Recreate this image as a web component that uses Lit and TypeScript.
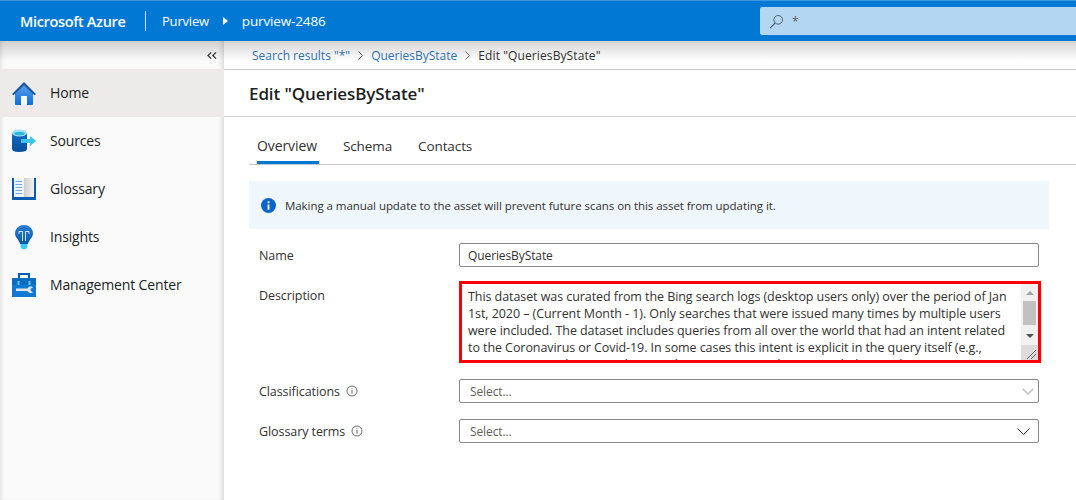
import { LitElement, html, css, svg } from 'lit';
import { customElement } from 'lit/decorators.js';

const homeIcon = html`<svg width="26" height="26" viewBox="0 0 26 26">
  <defs><linearGradient id="hg" x1="0" y1="0" x2="0" y2="1"><stop offset="0" stop-color="#5ea0ef"/><stop offset="1" stop-color="#0f6fd8"/></linearGradient></defs>
  <path d="M13 4 L22 13 V24 Q22 25 21 25 H5 Q4 25 4 24 V13 Z" fill="url(#hg)"/>
  <rect x="10" y="16" width="6" height="9" fill="#f4f8fd"/>
  <path d="M1 14 L13 2 L25 14 L23.4 15.3 L13 5.2 L2.6 15.3 Z" fill="#1b5a9e"/>
</svg>`;

const sourcesIcon = html`<svg width="26" height="26" viewBox="0 0 26 26">
  <defs><linearGradient id="sg" x1="0" y1="0" x2="0" y2="1"><stop offset="0" stop-color="#0f6ac0"/><stop offset="1" stop-color="#0a4f9c"/></linearGradient></defs>
  <path d="M1 5 V21 Q1 24 8 24 Q16 24 16 21 V5 Z" fill="url(#sg)"/>
  <ellipse cx="8.5" cy="5" rx="7.5" ry="3.4" fill="#9fe3f5"/>
  <ellipse cx="8.5" cy="5.6" rx="5.2" ry="1.9" fill="#2fb4e0"/>
  <path d="M10 11 H19 V8 L25 13 L19 18 V15 H10 Z" fill="#3cc4ea"/>
</svg>`;

const glossaryIcon = html`<svg width="26" height="26" viewBox="0 0 26 26">
  <defs><linearGradient id="gg" x1="0" y1="0" x2="1" y2="0"><stop offset="0" stop-color="#cfcfcf"/><stop offset="1" stop-color="#f2f2f2"/></linearGradient></defs>
  <rect x="1" y="2" width="24" height="22" fill="#0a5cb0"/>
  <rect x="3" y="2" width="10" height="19" fill="#f2f6fb"/>
  <rect x="13" y="2" width="10" height="19" fill="url(#gg)"/>
  ${[5, 8, 11, 14, 17].map(y => svg`<rect x="4.5" y=${y} width="6.5" height="1" fill="#6aa8ee"/>`)}
</svg>`;

const insightsIcon = html`<svg width="26" height="26" viewBox="0 0 26 26">
  <defs><linearGradient id="ig" x1="0" y1="0" x2="0" y2="1"><stop offset="0" stop-color="#2a7fd0"/><stop offset="1" stop-color="#0b57a8"/></linearGradient></defs>
  <path d="M13 1 C7 1 4 5.5 4 9.5 C4 13.5 8 15.5 9 20 H17 C18 15.5 22 13.5 22 9.5 C22 5.5 19 1 13 1 Z" fill="url(#ig)"/>
  <path d="M8 7.5 H11.5 M8 7.5 V10 M14.5 7.5 H18 M18 7.5 V10 M11.5 7.5 V17 M14.5 7.5 V17" stroke="#cfe6fb" stroke-width="1" fill="none"/>
  <path d="M9.5 20 H16.5 V23 L15 25 H11 L9.5 23 Z" fill="#3ccbf0"/>
</svg>`;

const mgmtIcon = html`<svg width="26" height="26" viewBox="0 0 26 26">
  <path d="M7 6 V1 H19 V6 H17 V3 H9 V6 Z" fill="#0a5cb0"/>
  <rect x="1" y="6" width="24" height="19" fill="#1079d2"/>
  <rect x="1" y="6" width="24" height="7" fill="#0b6cc0"/>
  <rect x="6.5" y="9" width="2" height="4" fill="#5cc6f0"/>
  <rect x="17.5" y="9" width="2" height="4" fill="#5cc6f0"/>
  <path d="M5 16.5 H16.5 A3.6 3.6 0 0 1 22 15.3 L19.5 17 V18.6 L22 20.2 A3.6 3.6 0 0 1 16.5 19 H5 Z" fill="#e4e6ea"/>
</svg>`;

const navItems = [
  { label: 'Home', icon: homeIcon, active: true },
  { label: 'Sources', icon: sourcesIcon, active: false },
  { label: 'Glossary', icon: glossaryIcon, active: false },
  { label: 'Insights', icon: insightsIcon, active: false },
  { label: 'Management Center', icon: mgmtIcon, active: false },
];

const descLines = [
  'This dataset was curated from the Bing search logs (desktop users only) over the period of Jan',
  '1st, 2020 – (Current Month - 1). Only searches that were issued many times by multiple users',
  'were included. The dataset includes queries from all over the world that had an intent related',
  'to the Coronavirus or Covid-19. In some cases this intent is explicit in the query itself (e.g.,',
  '“Coronavirus updates Seattle”), in other cases it is implicit , e.g. “Shelter in place”',
];

const infoOutline = html`<svg width="12" height="12" viewBox="0 0 12 12">
  <circle cx="6" cy="6" r="5" fill="none" stroke="#605e5c" stroke-width="0.9"/>
  <rect x="5.5" y="5" width="1" height="3.6" fill="#605e5c"/>
  <rect x="5.5" y="3.2" width="1" height="1" fill="#605e5c"/>
</svg>`;

const pathSep = html`<svg width="5" height="9" viewBox="0 0 5 9">
  <path d="M0.5 0.5 L4.5 4.5 L0.5 8.5" fill="none" stroke="#605e5c" stroke-width="0.9"/>
</svg>`;

@customElement('app-root')
export class AppRoot extends LitElement {
  static styles = css`
    :host {
      display: block;
      width: 1076px;
      height: 500px;
      overflow: hidden;
      position: relative;
      background: #fff;
      font-family: "Open Sans", "Noto Sans", sans-serif;
      color: #323130;
    }
    .top {
      height: 40px;
      border-top: 1px solid #3f97dc;
      background: #0078d4;
      color: #fff;
      display: flex;
      align-items: center;
      font-size: 13px;
    }
    .brand {
      margin-left: 20px;
      width: 125px;
      font-size: 14.5px;
      font-weight: 600;
      letter-spacing: -0.35px;
      white-space: nowrap;
    }
    .sep {
      width: 1px;
      height: 20px;
      background: #cfe4f6;
    }
    .crumb {
      margin-left: 16px;
      letter-spacing: -0.2px;
      font-weight: 500;
    }
    .crumb.res {
      margin-left: 0;
      font-size: 13.5px;
      letter-spacing: -0.15px;
    }
    .caret {
      margin: 0 14px;
      width: 0;
      height: 0;
      border-left: 5px solid #fff;
      border-top: 4px solid transparent;
      border-bottom: 4px solid transparent;
    }
    .search {
      margin-left: auto;
      width: 316px;
      height: 28px;
      background: #b3d6f2;
      border-radius: 2px 0 0 2px;
      display: flex;
      align-items: center;
      padding-left: 9px;
      box-sizing: border-box;
      gap: 8px;
      color: #605e5c;
      font-size: 12px;
    }
    .body {
      display: flex;
      height: 459px;
    }
    .shade {
      position: absolute;
      top: 41px;
      left: 0;
      right: 0;
      height: 20px;
      background: linear-gradient(rgba(0, 0, 0, 0.17), rgba(0, 0, 0, 0));
      pointer-events: none;
      z-index: 2;
    }
    .side {
      width: 224px;
      flex: none;
      background: #fafafa;
      box-shadow: inset 4px 0 4px -3px #dedede, inset -5px 0 4px -3px #d8d8d8;
    }
    .collapse {
      height: 28px;
      display: flex;
      justify-content: flex-end;
      align-items: center;
      padding-right: 7px;
    }
    .nav {
      height: 48px;
      display: flex;
      align-items: center;
      padding-left: 11px;
      gap: 13px;
      font-size: 14px;
      font-weight: 500;
      letter-spacing: -0.15px;
      color: #201f1e;
    }
    .nav.active {
      background: #edebe9;
    }
    .nav span {
      margin-top: -2px;
    }
    .nav svg {
      flex: none;
    }
    .main {
      flex: 1;
      min-width: 0;
    }
    .path {
      height: 28px;
      display: flex;
      align-items: center;
      padding-left: 28px;
      gap: 8px;
      font-size: 12px;
      color: #323130;
      border-bottom: 1px solid #c8c8c8;
    }
    .path a {
      color: #2f75ba;
    }
    .path span {
      letter-spacing: 0.1px;
    }
    .title {
      height: 46px;
      display: flex;
      align-items: center;
      padding-left: 25px;
      font-size: 17px;
      font-weight: 600;
      letter-spacing: -0.1px;
      color: #201f1e;
      border-bottom: 1px solid #d2d0ce;
    }
    .content {
      padding-left: 25px;
    }
    .tabs {
      margin-top: 16px;
      height: 31px;
      display: flex;
      padding-left: 8px;
      gap: 24px;
      font-size: 13.5px;
      letter-spacing: -0.1px;
      border-bottom: 1px solid #c8c8c8;
      color: #323130;
    }
    .tab {
      height: 31px;
      line-height: 26px;
      box-sizing: border-box;
      padding-right: 2px;
    }
    .tab.on {
      font-size: 14px;
      font-weight: 500;
      border-bottom: 3px solid #0078d4;
    }
    .notice {
      margin-top: 16px;
      width: 800px;
      height: 48px;
      background: #eff6fc;
      display: flex;
      align-items: center;
      padding-left: 12px;
      gap: 9px;
      box-sizing: border-box;
      font-size: 11.5px;
      letter-spacing: -0.055px;
      color: #323130;
    }
    .form {
      margin-top: 14px;
      display: grid;
      grid-template-columns: 200px 580px;
      padding-left: 10px;
      row-gap: 16px;
      font-size: 12.5px;
      letter-spacing: -0.08px;
    }
    .label {
      display: flex;
      align-items: center;
      gap: 6px;
      height: 24px;
      font-weight: 500;
      color: #323130;
    }
    .field {
      height: 24px;
      box-sizing: border-box;
      border: 1px solid #8a8886;
      border-radius: 2px;
      display: flex;
      align-items: center;
      padding: 0 8px;
      font-size: 12px;
      letter-spacing: -0.1px;
      color: #323130;
    }
    .field.sel {
      padding: 0 8px 0 10px;
      justify-content: space-between;
      color: #605e5c;
    }
    .field.sel.off {
      padding-right: 4px;
    }
    .textbox {
      width: 582px;
      height: 82px;
      margin-top: -2px;
      box-sizing: border-box;
      border: 3px solid #fa0000;
      position: relative;
      overflow: hidden;
      padding: 4px 0 0 6px;
      font-size: 12.5px;
      line-height: 17px;
      letter-spacing: -0.07px;
      white-space: nowrap;
      color: #323130;
    }
    .bar {
      position: absolute;
      top: 0;
      right: 0;
      width: 17px;
      height: 100%;
      background: #f1f1f1;
    }
    .up, .down {
      position: absolute;
      left: 5px;
      width: 0;
      height: 0;
      border-left: 4px solid transparent;
      border-right: 4px solid transparent;
    }
    .up { top: 7px; border-bottom: 4px solid #a3a3a3; }
    .down { top: 50px; border-top: 4px solid #505050; }
    .thumb {
      position: absolute;
      top: 17px;
      left: 2px;
      width: 13px;
      height: 24px;
      background: #c1c1c1;
    }
    .grip {
      position: absolute;
      right: 0;
      bottom: 0;
      width: 17px;
      height: 15px;
      background: #dcdcdc;
    }
  `;

  render() {
    return html`
      <div class="top">
        <div class="brand">Microsoft Azure</div>
        <div class="sep"></div>
        <div class="crumb">Purview</div>
        <div class="caret"></div>
        <div class="crumb res">purview-2486</div>
        <div class="search">
          <svg width="15" height="15" viewBox="0 0 15 15">
            <circle cx="9.2" cy="5.8" r="4.3" fill="none" stroke="#4d5f70" stroke-width="1"/>
            <path d="M6.2 9 L1 14.2" stroke="#4d5f70" stroke-width="1.1"/>
          </svg>
          <span>*</span>
        </div>
      </div>
      <div class="shade"></div>
      <div class="body">
        <div class="side">
          <div class="collapse">
            <svg width="10" height="7" viewBox="0 0 10 7">
              <path d="M4.2 0.4 L1 3.5 L4.2 6.6 M9 0.4 L5.8 3.5 L9 6.6" fill="none" stroke="#323130" stroke-width="1.2"/>
            </svg>
          </div>
          ${navItems.map(n => html`
            <div class="nav ${n.active ? 'active' : ''}">${n.icon}<span>${n.label}</span></div>
          `)}
        </div>
        <div class="main">
          <div class="path">
            <a>Search results "*"</a>${pathSep}<a>QueriesByState</a>${pathSep}<span>Edit "QueriesByState"</span>
          </div>
          <div class="title">Edit "QueriesByState"</div>
          <div class="content">
            <div class="tabs">
              <div class="tab on">Overview</div>
              <div class="tab">Schema</div>
              <div class="tab">Contacts</div>
            </div>
            <div class="notice">
              <svg width="15" height="15" viewBox="0 0 16 16">
                <circle cx="8" cy="8" r="8" fill="#0b63ce"/>
                <rect x="7" y="7" width="2" height="5.5" fill="#fff"/>
                <rect x="7" y="3.6" width="2" height="2" fill="#fff"/>
              </svg>
              <span>Making a manual update to the asset will prevent future scans on this asset from updating it.</span>
            </div>
            <div class="form">
              <div class="label">Name</div>
              <div class="field">QueriesByState</div>
              <div class="label">Description</div>
              <div class="textbox">
                ${descLines.map(l => html`<div>${l}</div>`)}
                <div class="bar">
                  <div class="up"></div>
                  <div class="thumb"></div>
                  <div class="down"></div>
                  <div class="grip">
                    <svg width="17" height="15" viewBox="0 0 17 15">
                      <path d="M6 14 L15 5 M10 14 L15 9" stroke="#6a6a6a" stroke-width="1"/>
                    </svg>
                  </div>
                </div>
              </div>
              <div class="label">Classifications ${infoOutline}</div>
              <div class="field sel off">Select...
                <svg width="12" height="7" viewBox="0 0 12 7"><path d="M0.8 0.8 L6 6 L11.2 0.8" fill="none" stroke="#c8c6c4" stroke-width="1.7"/></svg>
              </div>
              <div class="label">Glossary terms ${infoOutline}</div>
              <div class="field sel">Select...
                <svg width="13" height="7" viewBox="0 0 13 7"><path d="M0.5 0.5 L6.5 6.5 L12.5 0.5" fill="none" stroke="#323130" stroke-width="1"/></svg>
              </div>
            </div>
          </div>
        </div>
      </div>
    `;
  }
}
